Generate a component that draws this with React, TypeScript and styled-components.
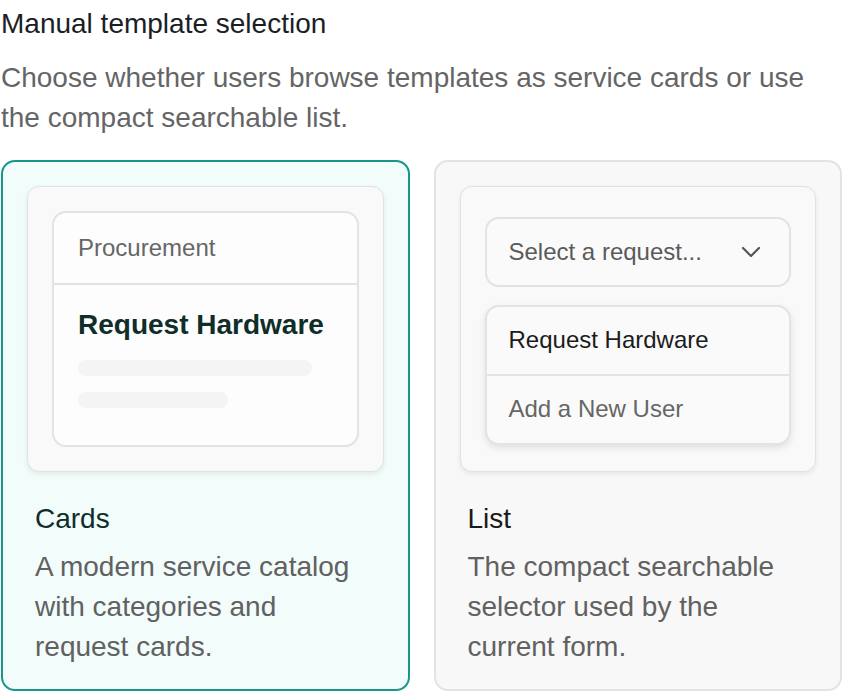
import React from "react";
import styled, { createGlobalStyle } from "styled-components";

const GlobalStyle = createGlobalStyle`
  html, body {
    margin: 0;
    padding: 0;
    background: #ffffff;
  }
  body {
    font-family: "Liberation Sans", Arial, Helvetica, sans-serif;
    -webkit-font-smoothing: antialiased;
  }
  * { box-sizing: border-box; }
`;

const Page = styled.div`
  width: 842px;
  padding-left: 1px;
  display: flex;
  flex-direction: column;
`;

const Title = styled.h2`
  margin: 0;
  font-size: 28px;
  line-height: 48px;
  font-weight: 400;
  color: #1b1e26;
`;

const Subtitle = styled.p`
  margin: 10px 0 0;
  font-size: 28px;
  line-height: 40px;
  color: #656565;
`;

const Options = styled.div`
  margin-top: 22px;
  display: grid;
  grid-template-columns: 1fr 1fr;
  gap: 24px;
`;

const Option = styled.div<{ $selected?: boolean }>`
  border: 2px solid ${(p) => (p.$selected ? "#17968a" : "#e3e3e3")};
  background: ${(p) => (p.$selected ? "#f2fcfb" : "#f8f8f8")};
  border-radius: 14px;
  padding: 24px 24px 22px;
  display: flex;
  flex-direction: column;
`;

const Preview = styled.div<{ $padTop?: number }>`
  height: 286px;
  border: 1px solid #e2e2e2;
  border-radius: 12px;
  background: #f9f9f9;
  box-shadow: 0 2px 5px rgba(0, 0, 0, 0.08);
  padding: ${(p) => p.$padTop ?? 24}px 24px 24px;
  display: flex;
  flex-direction: column;
`;

const MiniCard = styled.div`
  flex: 1;
  border: 2px solid #e3e3e3;
  border-radius: 14px;
  background: #fdfdfd;
  display: flex;
  flex-direction: column;
`;

const MiniHeader = styled.div`
  padding: 17px 24px;
  font-size: 24px;
  line-height: 36px;
  color: #666666;
  border-bottom: 2px solid #e3e3e3;
`;

const MiniBody = styled.div`
  padding: 20px 24px;
  display: flex;
  flex-direction: column;
`;

const MiniTitle = styled.div`
  font-size: 28px;
  line-height: 40px;
  font-weight: 700;
  color: #0f2e2a;
  margin-bottom: 15px;
`;

const SkeletonBar = styled.div<{ $width: string }>`
  width: ${(p) => p.$width};
  height: 16px;
  border-radius: 8px;
  background: #f4f4f4;
  & + & {
    margin-top: 16px;
  }
`;

const SelectBox = styled.div`
  height: 70px;
  border: 2px solid #e2e2e2;
  border-radius: 14px;
  background: #fafafa;
  padding: 0 22px 0 22px;
  display: flex;
  align-items: center;
  justify-content: space-between;
  font-size: 24px;
  color: #5a5a5a;
`;

const Dropdown = styled.div`
  margin-top: 18px;
  border: 2px solid #e3e3e3;
  border-radius: 14px;
  background: #fafafa;
  box-shadow: 0 3px 7px rgba(0, 0, 0, 0.1);
  display: flex;
  flex-direction: column;
  overflow: hidden;
`;

const DropdownItem = styled.div<{ $muted?: boolean }>`
  padding: 16px 22px 17px;
  font-size: 24px;
  line-height: 34px;
  color: ${(p) => (p.$muted ? "#666666" : "#1c1c1c")};
  & + & {
    border-top: 2px solid #e3e3e3;
  }
`;

const OptionText = styled.div`
  margin-top: 27px;
  padding: 0 8px;
  display: flex;
  flex-direction: column;
  gap: 8px;
`;

const OptionLabel = styled.div<{ $selected?: boolean }>`
  font-size: 28px;
  line-height: 40px;
  color: ${(p) => (p.$selected ? "#0f2e2a" : "#1a1a1a")};
`;

const OptionDesc = styled.div`
  font-size: 28px;
  line-height: 40px;
  color: #616161;
`;

const Chevron = () => (
  <svg width="32" height="32" viewBox="0 0 24 24" fill="none" stroke="#555" strokeWidth="1.6" strokeLinecap="round" strokeLinejoin="round">
    <path d="m6 9 6 6 6-6" />
  </svg>
);

export default function App() {
  return (
    <>
      <GlobalStyle />
      <Page>
        <Title>Manual template selection</Title>
        <Subtitle>
          Choose whether users browse templates as service cards or use the compact searchable list.
        </Subtitle>
        <Options>
          <Option $selected>
            <Preview>
              <MiniCard>
                <MiniHeader>Procurement</MiniHeader>
                <MiniBody>
                  <MiniTitle>Request Hardware</MiniTitle>
                  <SkeletonBar $width="92%" />
                  <SkeletonBar $width="59%" />
                </MiniBody>
              </MiniCard>
            </Preview>
            <OptionText>
              <OptionLabel $selected>Cards</OptionLabel>
              <OptionDesc>A modern service catalog with categories and request cards.</OptionDesc>
            </OptionText>
          </Option>
          <Option>
            <Preview $padTop={30}>
              <SelectBox>
                <span>Select a request...</span>
                <Chevron />
              </SelectBox>
              <Dropdown>
                <DropdownItem>Request Hardware</DropdownItem>
                <DropdownItem $muted>Add a New User</DropdownItem>
              </Dropdown>
            </Preview>
            <OptionText>
              <OptionLabel>List</OptionLabel>
              <OptionDesc>The compact searchable selector used by the current form.</OptionDesc>
            </OptionText>
          </Option>
        </Options>
      </Page>
    </>
  );
}
